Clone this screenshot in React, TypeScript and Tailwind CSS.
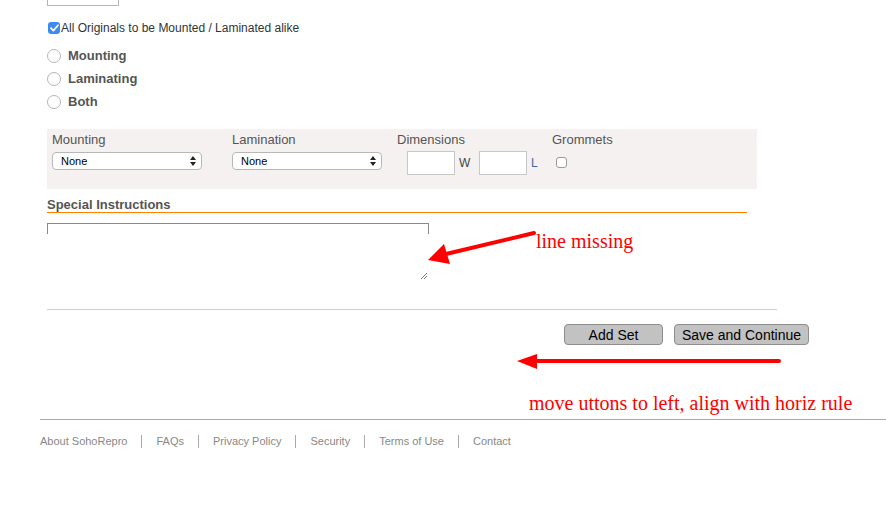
import React from "react";

const sans = { fontFamily: '"Liberation Sans", Arial, Helvetica, sans-serif' };

function Radio({ label }: { label: string }) {
  return (
    <div className="flex items-center h-[23px]">
      <span className="w-[14px] h-[14px] rounded-full border border-[#b5b5b5] bg-white box-border" />
      <span className="ml-[7px] text-[13px] font-bold text-[#555]">{label}</span>
    </div>
  );
}

function Select() {
  return (
    <div className="w-[150px] h-[18px] rounded-[4px] border border-[#b8b8b8] bg-white flex items-center justify-between pl-[8px] pr-[5px] box-border">
      <span className="text-[11px] text-black">None</span>
      <svg width="6" height="10" viewBox="0 0 6 10">
        <path d="M3 0 L6 4 L0 4 Z" fill="#222" />
        <path d="M3 10 L6 6 L0 6 Z" fill="#222" />
      </svg>
    </div>
  );
}

function Sep() {
  return <span className="mx-[14px] h-[13px] w-px bg-[#aaa] inline-block" />;
}

export default function App() {
  return (
    <div className="relative w-[886px] h-[505px] bg-white overflow-hidden" style={sans}>
      <div className="pl-[47px]">
        {/* top input remnant */}
        <div className="w-[72px] h-[6px] border-x border-b border-[#b5b5b5] box-border" />

        {/* checkbox row */}
        <div className="mt-[15px] flex items-center h-[14px]">
          <span className="w-[12px] h-[12px] ml-[1px] rounded-[3px] bg-[#3d8bf2] flex items-center justify-center">
            <svg width="9" height="8" viewBox="0 0 9 8">
              <path d="M1 4.2 L3.4 6.6 L8 1.2" stroke="#fff" strokeWidth="1.7" fill="none" strokeLinecap="round" strokeLinejoin="round" />
            </svg>
          </span>
          <span className="ml-[1px] text-[12px] text-[#333]">All Originals to be Mounted / Laminated alike</span>
        </div>

        {/* radios */}
        <div className="mt-[9px]">
          <Radio label="Mounting" />
          <Radio label="Laminating" />
          <Radio label="Both" />
        </div>

        {/* options panel */}
        <div className="mt-[16px] w-[710px] h-[60px] bg-[#f4f1f0] pl-[5px] pt-[3px] flex box-border">
          <div className="w-[180px]">
            <div className="text-[13px] text-[#555] leading-[16px]">Mounting</div>
            <div className="mt-[4px]"><Select /></div>
          </div>
          <div className="w-[165px]">
            <div className="text-[13px] text-[#555] leading-[16px]">Lamination</div>
            <div className="mt-[4px]"><Select /></div>
          </div>
          <div className="w-[155px]">
            <div className="text-[13px] text-[#555] leading-[16px]">Dimensions</div>
            <div className="mt-[3px] ml-[10px] flex items-center">
              <span className="w-[48px] h-[24px] border border-[#c8c8c8] bg-white box-border" />
              <span className="ml-[4px] w-[20px] text-[12px] text-[#444]">W</span>
              <span className="w-[48px] h-[24px] border border-[#c8c8c8] bg-white box-border" />
              <span className="ml-[4px] text-[12px] text-[#3b6aa8]">L</span>
            </div>
          </div>
          <div>
            <div className="text-[13px] text-[#555] leading-[16px]">Grommets</div>
            <div className="mt-[9px] ml-[4px]">
              <span className="block w-[11px] h-[11px] rounded-[3px] border border-[#999] bg-white box-border" />
            </div>
          </div>
        </div>

        {/* special instructions */}
        <div className="mt-[8px] w-[700px]">
          <div className="text-[13px] font-bold text-[#555] leading-[15px]">Special Instructions</div>
          <div className="h-[1px] bg-[#ff8000]" />
        </div>

        {/* textarea remnant */}
        <div className="mt-[10px] w-[382px] h-[58px] flex flex-col">
          <div className="h-[11px] border-x border-t border-[#8a8a8a] box-border" />
          <div className="flex-1 flex justify-end items-end pr-[1px] pb-[1px]">
            <svg width="8" height="8" viewBox="0 0 8 8">
              <path d="M1 7 L7 1 M4 7 L7 4" stroke="#777" strokeWidth="1" />
            </svg>
          </div>
        </div>

        {/* gray rule */}
        <div className="mt-[28px] w-[730px] h-px bg-[#cfcfcf]" />

        {/* buttons */}
        <div className="mt-[14px] w-[762px] flex justify-end gap-[11px]">
          <button className="w-[99px] h-[21px] rounded-[4px] border border-[#8e8e8e] bg-[#c2c2c2] text-[14px] text-black leading-none box-border" style={sans}>
            Add Set
          </button>
          <button className="w-[135px] h-[21px] rounded-[4px] border border-[#8e8e8e] bg-[#c2c2c2] text-[14px] text-black leading-none box-border" style={sans}>
            Save and Continue
          </button>
        </div>
      </div>

      {/* footer */}
      <div className="mt-[74px] ml-[40px] h-px bg-[#aaa]" />
      <div className="mt-[15px] ml-[40px] flex items-center text-[11px] text-[#888] h-[13px]">
        <span>About SohoRepro</span>
        <Sep />
        <span>FAQs</span>
        <Sep />
        <span>Privacy Policy</span>
        <Sep />
        <span>Security</span>
        <Sep />
        <span>Terms of Use</span>
        <Sep />
        <span>Contact</span>
      </div>

      {/* annotation overlays */}
      <svg className="absolute left-0 top-0 pointer-events-none" width="886" height="505">
        <line x1="534" y1="233" x2="446" y2="254" stroke="#ff0000" strokeWidth="4" strokeLinecap="round" />
        <polygon points="428,260 444,244 450,264" fill="#ff0000" />
        <line x1="779" y1="361" x2="535" y2="361" stroke="#ff0000" strokeWidth="4" strokeLinecap="round" />
        <polygon points="517,361 537,354 537,369" fill="#ff0000" />
      </svg>
      <div
        className="absolute left-[536px] top-[229px] text-[20px] leading-[24px] text-[#ff0000]"
        style={{ fontFamily: '"Liberation Serif", "Times New Roman", serif' }}
      >
        line missing
      </div>
      <div
        className="absolute left-[529px] top-[391px] text-[20px] leading-[24px] text-[#ff0000]"
        style={{ fontFamily: '"Liberation Serif", "Times New Roman", serif' }}
      >
        move uttons to left, align with horiz rule
      </div>
    </div>
  );
}
